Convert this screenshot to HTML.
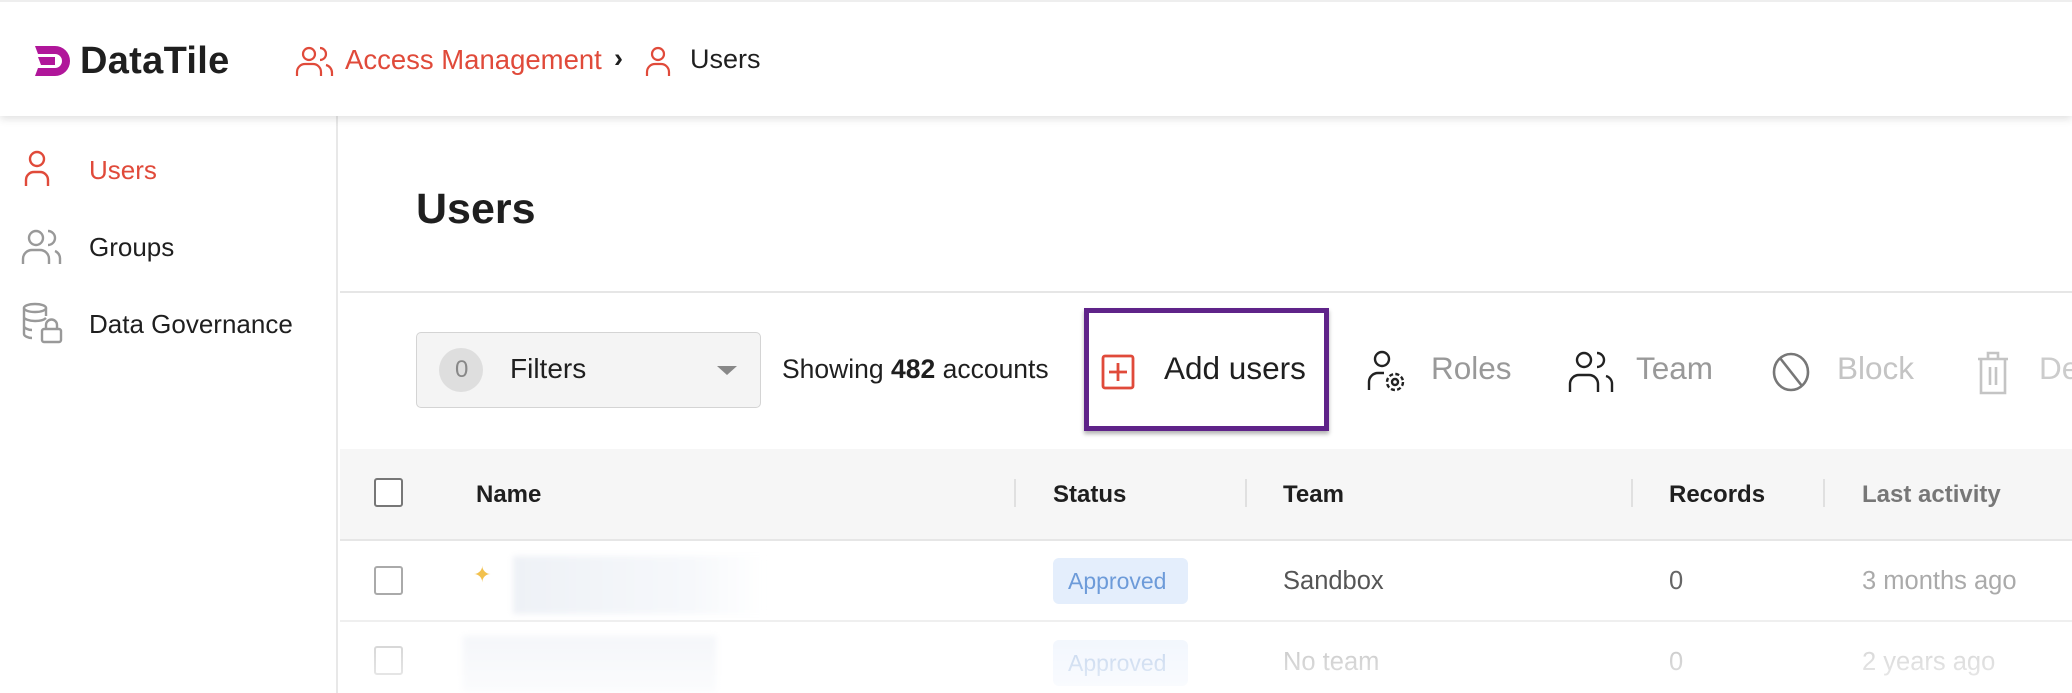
<!DOCTYPE html>
<html><head><meta charset="utf-8"><style>
*{box-sizing:border-box;margin:0;padding:0}
body{width:2072px;height:693px;overflow:hidden;background:#fff;font-family:"Liberation Sans",Arial,sans-serif;color:#1f1f1f;position:relative}
.a{position:absolute}
.hdr{left:0;top:0;width:2072px;height:116px;background:#fff;box-shadow:0 3px 8px rgba(0,0,0,.12);z-index:5;border-top:2px solid #eee}
.side{left:0;top:116px;width:338px;height:577px;border-right:2px solid #e8e8e8}
.t{position:absolute;white-space:nowrap;line-height:1}
.red{color:#e04a3a}
svg{position:absolute;overflow:visible}
</style></head><body>
<div class="a hdr">
  <svg style="left:33px;top:42px" width="42" height="34" viewBox="0 0 42 34"><path d="M2 2h20a15 15 0 0 1 0 30H2l3-8h17a7 7 0 0 0 0-14H5z" fill="#b0169a"/><path d="M5 13h17v8H8z" fill="#b0169a"/></svg>
  <div class="t" style="left:80px;top:40px;font-size:38px;font-weight:bold;letter-spacing:0.3px">DataTile</div>
  <svg style="left:296px;top:43px" width="38" height="32" viewBox="0 0 38 32" fill="none" stroke="#e04a3a" stroke-width="2.2"><circle cx="13" cy="9" r="6"/><path d="M1 31v-4a8 8 0 0 1 8-8h8a8 8 0 0 1 8 8v4"/><path d="M24 3a6 6 0 0 1 0 12M30 20a8 8 0 0 1 6 8v3"/></svg>
  <div class="t red" style="left:345px;top:44px;font-size:27.5px">Access Management</div>
  <div class="t" style="left:614px;top:43px;font-size:27px;font-weight:bold">›</div>
  <svg style="left:645px;top:43px" width="26" height="32" viewBox="0 0 26 32" fill="none" stroke="#e04a3a" stroke-width="2.2"><circle cx="13" cy="9" r="6"/><path d="M2 31v-4a8 8 0 0 1 8-8h6a8 8 0 0 1 8 8v4"/></svg>
  <div class="t" style="left:690px;top:44px;font-size:27px">Users</div>
</div>
<div class="a side">
  <svg style="left:24px;top:34px" width="26" height="36" viewBox="0 0 26 36" fill="none" stroke="#e04a3a" stroke-width="2.4"><circle cx="13" cy="9" r="7"/><path d="M2 36v-6a8 8 0 0 1 8-8h6a8 8 0 0 1 8 8v6"/></svg>
  <div class="t red" style="left:89px;top:41px;font-size:26px">Users</div>
  <svg style="left:22px;top:112px" width="40" height="36" viewBox="0 0 40 36" fill="none" stroke="#999" stroke-width="2.4"><circle cx="14" cy="10" r="7"/><path d="M1 36v-5a9 9 0 0 1 9-9h8a9 9 0 0 1 9 9v5"/><path d="M26 3a7 7 0 0 1 0 14M33 23a8 8 0 0 1 5 8v5"/></svg>
  <div class="t" style="left:89px;top:118px;font-size:26px">Groups</div>
  <svg style="left:22px;top:186px" width="42" height="42" viewBox="0 0 42 42" fill="none" stroke="#999" stroke-width="2.4"><ellipse cx="13" cy="6" rx="11" ry="4"/><path d="M2 6v26c0 2 4 4 8 4M2 15c0 2 5 4 11 4s9-1 11-3M2 24c0 2 4 4 8 4M24 6v8"/><rect x="20" y="27" width="19" height="13" rx="2"/><path d="M24 27v-4a5 5 0 0 1 11 0v4"/></svg>
  <div class="t" style="left:89px;top:195px;font-size:26px">Data Governance</div>
</div>
<div class="t" style="left:416px;top:188px;font-size:43px;font-weight:bold">Users</div>
<div class="a" style="left:340px;top:291px;width:1732px;height:2px;background:#e6e6e6"></div>
<div class="a" style="left:416px;top:332px;width:345px;height:76px;background:#f4f4f4;border:1.5px solid #d4d4d4;border-radius:5px"></div>
<div class="a" style="left:439px;top:348px;width:44px;height:44px;border-radius:50%;background:#dedede"></div>
<div class="t" style="left:455px;top:358px;font-size:24px;color:#888">0</div>
<div class="t" style="left:510px;top:355px;font-size:28px">Filters</div>
<div class="a" style="left:717px;top:366px;width:0;height:0;border-left:10px solid transparent;border-right:10px solid transparent;border-top:9px solid #888"></div>
<div class="t" style="left:782px;top:356px;font-size:26.5px">Showing <b>482</b> accounts</div>
<div class="a" style="left:1084px;top:308px;width:245px;height:123px;border:5px solid #5f2389;box-shadow:0 3px 4px rgba(0,0,0,.3)"></div>
<svg style="left:1101px;top:354px" width="34" height="36" viewBox="0 0 34 36" fill="none" stroke="#e04a3a" stroke-width="2.8"><rect x="2" y="2" width="30" height="32" rx="2"/><path d="M17 9v18M8 18h18"/></svg>
<div class="t" style="left:1164px;top:353px;font-size:31.5px">Add users</div>
<svg style="left:1367px;top:350px" width="44" height="44" viewBox="0 0 44 44" fill="none" stroke="#222" stroke-width="2.4"><circle cx="15" cy="9" r="7"/><path d="M2 40v-8a9 9 0 0 1 9-9h6"/><circle cx="28" cy="32" r="3"/><circle cx="28" cy="32" r="8" stroke-dasharray="4 2.3"/></svg>
<div class="t" style="left:1431px;top:353px;font-size:31.5px;color:#999">Roles</div>
<svg style="left:1568px;top:350px" width="46" height="42" viewBox="0 0 46 42" fill="none" stroke="#222" stroke-width="2.4"><circle cx="16" cy="10" r="7"/><path d="M2 42v-8a9 9 0 0 1 9-9h10a9 9 0 0 1 9 9v8"/><path d="M29 3a7 7 0 0 1 0 14M38 26a8 8 0 0 1 6 8v8"/></svg>
<div class="t" style="left:1636px;top:353px;font-size:31.5px;color:#999">Team</div>
<svg style="left:1772px;top:352px" width="38" height="40" viewBox="0 0 38 40" fill="none" stroke="#777" stroke-width="2.6"><ellipse cx="19" cy="20" rx="17" ry="18"/><path d="M8 6l22 28"/></svg>
<div class="t" style="left:1837px;top:353px;font-size:31.5px;color:#c4c4c4">Block</div>
<svg style="left:1976px;top:350px" width="34" height="46" viewBox="0 0 34 46" fill="none" stroke="#c4c4c4" stroke-width="2.6"><path d="M2 9h30M12 9V3h10v6M5 9v34h24V9M14 17v18M20 17v18"/></svg>
<div class="t" style="left:2039px;top:353px;font-size:31.5px;color:#ccc">De</div>
<div class="a" style="left:340px;top:449px;width:1732px;height:92px;background:#f6f6f6;border-bottom:2px solid #e6e6e6"></div>
<div class="a" style="left:374px;top:478px;width:29px;height:29px;border:2.5px solid #777;border-radius:3px;background:#fff"></div>
<div class="t" style="left:476px;top:483px;font-size:24px;font-weight:bold">Name</div>
<div class="a" style="left:1014px;top:479px;width:2px;height:28px;background:#e0e0e0"></div>
<div class="t" style="left:1053px;top:483px;font-size:24px;font-weight:bold">Status</div>
<div class="a" style="left:1245px;top:479px;width:2px;height:28px;background:#e0e0e0"></div>
<div class="t" style="left:1283px;top:483px;font-size:24px;font-weight:bold">Team</div>
<div class="a" style="left:1631px;top:479px;width:2px;height:28px;background:#e0e0e0"></div>
<div class="t" style="left:1669px;top:483px;font-size:24px;font-weight:bold">Records</div>
<div class="a" style="left:1823px;top:479px;width:2px;height:28px;background:#e0e0e0"></div>
<div class="t" style="left:1862px;top:483px;font-size:24px;font-weight:bold;color:#777">Last activity</div>
<div class="a" style="left:374px;top:566px;width:29px;height:29px;border:2.5px solid #aaa;border-radius:3px"></div>
<div class="t" style="left:473px;top:564px;font-size:22px;color:#f2c14e">✦</div>
<div class="a" style="left:513px;top:556px;width:253px;height:58px;background:linear-gradient(90deg,#eef1f6,#f6f8fb 70%,#fff);filter:blur(3px)"></div>
<div class="a" style="left:1053px;top:558px;width:135px;height:46px;background:#e4eefc;border-radius:6px"></div>
<div class="t" style="left:1068px;top:570px;font-size:23px;color:#6d9bd9">Approved</div>
<div class="t" style="left:1283px;top:569px;font-size:25.5px;color:#555">Sandbox</div>
<div class="t" style="left:1669px;top:569px;font-size:25.5px;color:#666">0</div>
<div class="t" style="left:1862px;top:569px;font-size:25.5px;color:#aaa">3 months ago</div>
<div class="a" style="left:340px;top:620px;width:1732px;height:2px;background:#efefef"></div>
<div class="a" style="left:374px;top:646px;width:29px;height:29px;border:2.5px solid #ccc;border-radius:3px"></div>
<div class="a" style="left:463px;top:636px;width:253px;height:56px;background:#f3f5f9;filter:blur(3px)"></div>
<div class="a" style="left:1053px;top:640px;width:135px;height:46px;background:#f0f5fd;border-radius:6px"></div>
<div class="t" style="left:1068px;top:652px;font-size:23px;color:#b8cdea">Approved</div>
<div class="t" style="left:1283px;top:650px;font-size:25.5px;color:#bbb">No team</div>
<div class="t" style="left:1669px;top:650px;font-size:25.5px;color:#bbb">0</div>
<div class="t" style="left:1862px;top:650px;font-size:25.5px;color:#ccc">2 years ago</div>
<div class="a" style="left:340px;top:622px;width:1732px;height:71px;background:linear-gradient(#fff0,#ffffffaa)"></div>
</body></html>
